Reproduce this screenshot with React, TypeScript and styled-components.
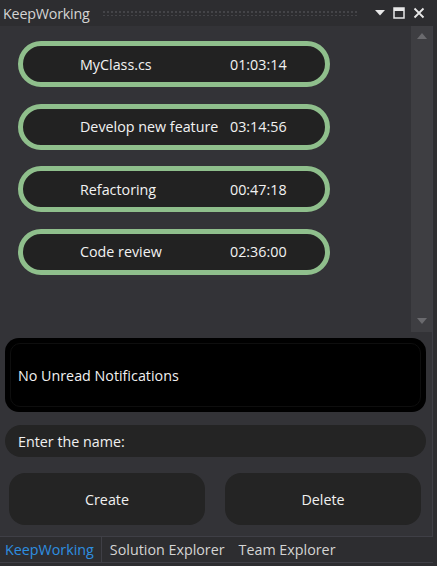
import React from "react";
import styled, { createGlobalStyle } from "styled-components";

const Global = createGlobalStyle`
  html, body { margin: 0; padding: 0; background: #2d2d30; }
  * { box-sizing: border-box; }
`;

const Window = styled.div`
  width: 437px;
  height: 566px;
  display: flex;
  flex-direction: column;
  background: #2d2d30;
  font-family: "Open Sans", "Noto Sans", sans-serif;
  color: #f0f0f0;
  overflow: hidden;
`;

const TitleBar = styled.div`
  height: 26px;
  display: flex;
  align-items: center;
  padding: 0 12px 0 3px;
  gap: 8px;
  background: #2d2d30;
`;

const Title = styled.div`
  font-size: 14.3px;
  color: #d4d4d4;
  letter-spacing: -0.2px;
`;

const Grip = styled.div`
  flex: 1;
  height: 5px;
  margin: 0 10px 0 4px;
  background-image: radial-gradient(circle, #444448 0.9px, transparent 1.1px);
  background-size: 4px 4px;
  background-position: 0 -1px;
`;

const TitleIcons = styled.div`
  display: flex;
  align-items: center;
  gap: 8px;
`;

const Body = styled.div`
  flex: 1;
  display: flex;
  flex-direction: column;
  background: #333337;
  border-right: 1px solid #3f3f46;
  margin-right: 4px;
  min-height: 0;
`;

const ScrollArea = styled.div`
  height: 306px;
  display: flex;
`;

const List = styled.div`
  flex: 1;
  display: flex;
  flex-direction: column;
  gap: 16.5px;
  padding: 15px 0 0 18px;
`;

const Pill = styled.div`
  width: 312px;
  height: 46px;
  border: 5px solid #8fbf8c;
  border-radius: 23px;
  background: #222222;
  display: grid;
  grid-template-columns: 150px auto;
  align-items: center;
  padding-left: 57px;
  font-size: 14.3px;
  color: #f2f2f2;
`;

const Name = styled.span`
  white-space: nowrap;
`;

const Scrollbar = styled.div`
  width: 21px;
  background: #3e3e42;
  display: flex;
  flex-direction: column;
  justify-content: space-between;
  align-items: center;
  padding: 7px 0 8px;
`;

const Arrow = styled.div<{ $down?: boolean }>`
  width: 0;
  height: 0;
  border-left: 5px solid transparent;
  border-right: 5px solid transparent;
  ${(p) =>
    p.$down
      ? "border-top: 6px solid #6a6a6e;"
      : "border-bottom: 6px solid #6a6a6e;"}
`;

const Bottom = styled.div`
  flex: 1;
  display: flex;
  flex-direction: column;
  padding: 6px 6px 0 5px;
`;

const Notification = styled.div`
  height: 74px;
  background: #000;
  border-radius: 14px;
  padding: 5px;
`;

const NotificationInner = styled.div`
  height: 100%;
  border: 1px solid #0e0e0e;
  border-radius: 10px;
  display: flex;
  align-items: center;
  padding-left: 7px;
  font-size: 14.3px;
  color: #f0f0f0;
`;

const Input = styled.div`
  margin-top: 13px;
  height: 32px;
  border-radius: 16px;
  background: #242424;
  display: flex;
  align-items: center;
  padding-left: 13px;
  font-size: 14.3px;
  color: #f0f0f0;
`;

const Buttons = styled.div`
  margin-top: 16px;
  display: grid;
  grid-template-columns: 196px 196px;
  justify-content: space-between;
  padding: 0 0 0 4px;
  width: 416px;
`;

const Button = styled.div`
  height: 52px;
  border-radius: 16px;
  background: #242424;
  display: flex;
  align-items: center;
  justify-content: center;
  font-size: 14.3px;
  color: #f0f0f0;
`;

const TabBar = styled.div`
  height: 27px;
  display: flex;
  align-items: stretch;
  background: #2d2d30;
  border-top: 1px solid #3f3f46;
  border-bottom: 1px solid #3f3f46;
  margin-bottom: 3px;
  margin-right: 4px;
`;

const Tab = styled.div<{ $active?: boolean }>`
  display: flex;
  align-items: center;
  padding: 0 ${(p) => (p.$active ? 7 : 6)}px 0 ${(p) => (p.$active ? 5 : 8)}px;
  font-size: 14.3px;
  color: ${(p) => (p.$active ? "#2d8fe0" : "#d4d4d4")};
  ${(p) => (p.$active ? "border-right: 1px solid #3f3f46;" : "")}
`;

const tasks = [
  { name: "MyClass.cs", time: "01:03:14" },
  { name: "Develop new feature", time: "03:14:56" },
  { name: "Refactoring", time: "00:47:18" },
  { name: "Code review", time: "02:36:00" },
];

export default function App() {
  return (
    <Window>
      <Global />
      <TitleBar>
        <Title>KeepWorking</Title>
        <Grip />
        <TitleIcons>
          <svg width="10" height="6" viewBox="0 0 10 6">
            <path d="M0 0 H10 L5 5.5 Z" fill="#e8e8e8" />
          </svg>
          <svg width="12" height="12" viewBox="0 0 12 12">
            <rect x="1" y="1" width="10" height="10" fill="none" stroke="#e8e8e8" strokeWidth="1.5" />
            <rect x="1" y="1" width="10" height="3" fill="#e8e8e8" />
          </svg>
          <svg width="12" height="12" viewBox="0 0 12 12">
            <path d="M1.5 1.5 L10.5 10.5 M10.5 1.5 L1.5 10.5" stroke="#e8e8e8" strokeWidth="1.8" />
          </svg>
        </TitleIcons>
      </TitleBar>
      <Body>
        <ScrollArea>
          <List>
            {tasks.map((t) => (
              <Pill key={t.name}>
                <Name>{t.name}</Name>
                <span>{t.time}</span>
              </Pill>
            ))}
          </List>
          <Scrollbar>
            <Arrow />
            <Arrow $down />
          </Scrollbar>
        </ScrollArea>
        <Bottom>
          <Notification>
            <NotificationInner>No Unread Notifications</NotificationInner>
          </Notification>
          <Input>Enter the name:</Input>
          <Buttons>
            <Button>Create</Button>
            <Button>Delete</Button>
          </Buttons>
        </Bottom>
      </Body>
      <TabBar>
        <Tab $active>KeepWorking</Tab>
        <Tab>Solution Explorer</Tab>
        <Tab>Team Explorer</Tab>
      </TabBar>
    </Window>
  );
}
